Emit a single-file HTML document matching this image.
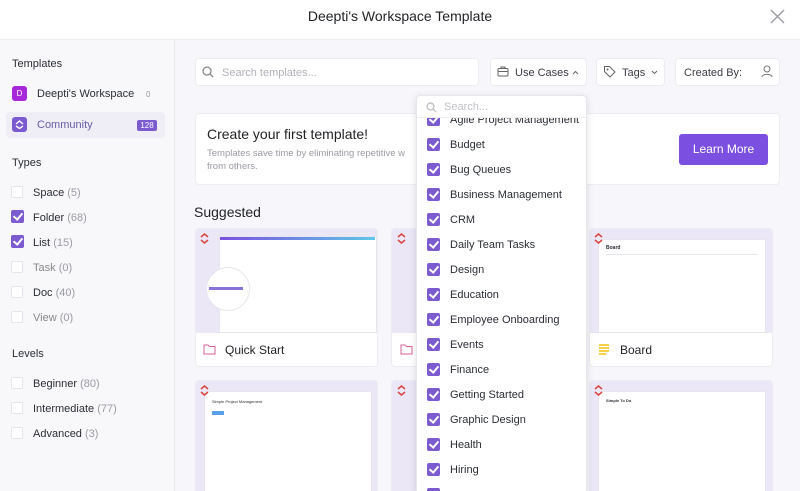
<!DOCTYPE html>
<html><head><meta charset="utf-8"><style>
*{box-sizing:border-box;margin:0;padding:0}
html,body{width:800px;height:491px;overflow:hidden}
body{font-family:"Liberation Sans",sans-serif;background:#f7f7fb;position:relative;color:#2a2e34}
.a{position:absolute}
.hdr{left:0;top:0;width:800px;height:40px;background:#fff;border-bottom:1px solid #ececf0}
.side{left:0;top:40px;width:175px;height:451px;background:#f8f8fb;border-right:1px solid #e9e9ee}
.h{font-size:11px;color:#2a2e34}
.t{font-size:11px;color:#2a2e34;white-space:nowrap}
.g{color:#9a9ca3}
.cb{width:12px;height:12px;border:1px solid #e4e4ea;border-radius:2px;background:#fff}
.cbk{width:13px;height:13px;border-radius:2px;background:#7b5bcf}
.cbk:after{content:"";position:absolute;left:4px;top:1px;width:4px;height:7px;border:solid #fff;border-width:0 2px 2px 0;transform:rotate(40deg)}
.box{background:#fff;border:1px solid #ececf1;border-radius:4px}
.card{background:#fff;border:1px solid #ececf1;border-radius:4px;overflow:hidden}
.img{background:#ebe7f7}
.shot{background:#fff;border:1px solid #e6e6ec}
.ln{height:2px;background:#e6e6ec;position:absolute}
</style></head><body>
<div class="a hdr"></div>
<div class="a" style="left:0;top:8px;width:800px;text-align:center;font-size:14px;color:#1f2125">Deepti's Workspace Template</div>
<svg class="a" style="left:770px;top:9px" width="15" height="15"><path d="M1 1L14 14M14 1L1 14" stroke="#9a9ca3" stroke-width="1.4"/></svg>

<div class="a side"></div>
<div class="a h" style="left:12px;top:58px">Templates</div>
<div class="a" style="left:12px;top:86px;width:15px;height:15px;border-radius:3px;background:#a728d8;color:#fff;font-size:8px;text-align:center;line-height:15px">D</div>
<div class="a t" style="left:37px;top:88px">Deepti's Workspace</div>
<div class="a" style="left:146px;top:90px;font-size:8px;color:#999">0</div>
<div class="a" style="left:6px;top:112px;width:159px;height:26px;background:#efeef6;border-radius:4px"></div>
<div class="a" style="left:12px;top:117px;width:15px;height:15px;border-radius:3px;background:#7b5bcf"></div>
<svg class="a" style="left:15px;top:120px" width="9" height="9"><path d="M1 4L4.5 1L8 4M1 6L4.5 8.5L8 6" stroke="#fff" stroke-width="1.4" fill="none"/></svg>
<div class="a t" style="left:37px;top:119px;color:#6a5aa8">Community</div>
<div class="a" style="left:137px;top:120px;width:20px;height:11px;border-radius:2px;background:#7b5bcf;color:#fff;font-size:8px;text-align:center;line-height:11px">128</div>
<div class="a h" style="left:12px;top:157px">Types</div>
<div class="a cb" style="left:11px;top:186px"></div><div class="a t" style="left:33px;top:187px">Space <span class="g">(5)</span></div>
<div class="a cbk" style="left:11px;top:210px"></div><div class="a t" style="left:33px;top:212px">Folder <span class="g">(68)</span></div>
<div class="a cbk" style="left:11px;top:235px"></div><div class="a t" style="left:33px;top:237px">List <span class="g">(15)</span></div>
<div class="a cb" style="left:11px;top:261px"></div><div class="a t" style="left:33px;top:262px;color:#888">Task <span class="g">(0)</span></div>
<div class="a cb" style="left:11px;top:286px"></div><div class="a t" style="left:33px;top:287px">Doc <span class="g">(40)</span></div>
<div class="a cb" style="left:11px;top:311px"></div><div class="a t" style="left:33px;top:312px;color:#888">View <span class="g">(0)</span></div>
<div class="a h" style="left:12px;top:348px">Levels</div>
<div class="a cb" style="left:11px;top:377px"></div><div class="a t" style="left:33px;top:378px">Beginner <span class="g">(80)</span></div>
<div class="a cb" style="left:11px;top:402px"></div><div class="a t" style="left:33px;top:403px">Intermediate <span class="g">(77)</span></div>
<div class="a cb" style="left:11px;top:427px"></div><div class="a t" style="left:33px;top:428px">Advanced <span class="g">(3)</span></div>

<div class="a box" style="left:195px;top:58px;width:284px;height:28px"></div>
<svg class="a" style="left:202px;top:66px" width="12" height="12"><circle cx="5" cy="5" r="4" stroke="#888" stroke-width="1.3" fill="none"/><path d="M8 8L11 11" stroke="#888" stroke-width="1.3"/></svg>
<div class="a t" style="left:222px;top:67px;color:#b0b2b8">Search templates...</div>
<div class="a box" style="left:490px;top:58px;width:97px;height:28px"></div>
<svg class="a" style="left:497px;top:66px" width="12" height="11"><rect x="1" y="2.5" width="10" height="7.5" rx="1" stroke="#666" fill="none"/><path d="M4 2.5V1H8V2.5M1 5.5H11" stroke="#666" fill="none"/></svg>
<div class="a t" style="left:515px;top:67px;color:#3a3d44">Use Cases</div>
<svg class="a" style="left:572px;top:70px" width="7" height="5"><path d="M1 4L3.5 1.5L6 4" stroke="#666" fill="none"/></svg>
<div class="a box" style="left:596px;top:58px;width:69px;height:28px"></div>
<svg class="a" style="left:603px;top:65px" width="13" height="13"><path d="M1.5 1.5H6.5L12 7L7 12L1.5 6.5Z" stroke="#666" fill="none"/><circle cx="4.5" cy="4.5" r="1" fill="#666"/></svg>
<div class="a t" style="left:622px;top:67px;color:#3a3d44">Tags</div>
<svg class="a" style="left:651px;top:70px" width="7" height="5"><path d="M1 1L3.5 3.5L6 1" stroke="#666" fill="none"/></svg>
<div class="a box" style="left:675px;top:58px;width:105px;height:28px"></div>
<div class="a t" style="left:684px;top:67px;color:#3a3d44">Created By:</div>
<svg class="a" style="left:761px;top:65px" width="12" height="13"><circle cx="6" cy="4" r="3" stroke="#777" fill="none"/><path d="M1 12C1 8.5 11 8.5 11 12" stroke="#777" fill="none"/></svg>

<div class="a box" style="left:195px;top:113px;width:585px;height:72px"></div>
<div class="a" style="left:207px;top:126px;font-size:14px;color:#1f2125">Create your first template!</div>
<div class="a" style="left:207px;top:148px;font-size:9.5px;color:#9a9ca3;line-height:12.5px">Templates save time by eliminating repetitive w<br>from others.</div>
<div class="a" style="left:679px;top:134px;width:89px;height:31px;background:#7b4fe0;border-radius:3px;color:#fff;font-size:12px;text-align:center;line-height:31px">Learn More</div>

<div class="a" style="left:194px;top:204px;font-size:14px;color:#1f2125">Suggested</div>

<div class="a card" style="left:195px;top:228px;width:183px;height:139px"><div class="img" style="height:104px;position:relative"><div class="a shot" style="left:23px;top:7px;width:158px;height:97px"></div><div class="a" style="left:24px;top:8px;width:155px;height:3px;background:linear-gradient(90deg,#7b4fe0,#5ec6e8)"></div><div class="a" style="left:10px;top:38px;width:44px;height:44px;border-radius:50%;background:#fff;border:1px solid #e6e6ec"></div><div class="a" style="left:13px;top:58px;width:34px;height:3px;background:#8a73d8"></div></div></div>
<svg class="a" style="left:203px;top:343px" width="13" height="12"><path d="M1 2H5L6.5 3.5H12V11H1Z" stroke="#d7619a" fill="none"/></svg>
<div class="a" style="left:225px;top:343px;font-size:12px;color:#1f2125">Quick Start</div>
<div class="a card" style="left:391px;top:228px;width:183px;height:139px"><div class="img" style="height:104px"></div></div>
<svg class="a" style="left:400px;top:343px" width="13" height="12"><path d="M1 2H5L6.5 3.5H12V11H1Z" stroke="#d7619a" fill="none"/></svg>
<div class="a card" style="left:589px;top:228px;width:184px;height:139px"><div class="img" style="height:104px;position:relative"><div class="a shot" style="left:8px;top:10px;width:168px;height:94px"></div><div class="a" style="left:16px;top:16px;font-size:5px;font-weight:bold">Board</div><div class="ln" style="left:16px;top:25px;width:152px;height:1px"></div></div></div>
<svg class="a" style="left:598px;top:343px" width="12" height="12"><path d="M1 2H11M1 5H11M1 8H11M1 11H8" stroke="#f1c40f" stroke-width="1.4"/></svg>
<div class="a" style="left:620px;top:343px;font-size:12px;color:#1f2125">Board</div>

<div class="a card" style="left:195px;top:380px;width:183px;height:120px"><div class="img" style="height:120px;position:relative"><div class="a shot" style="left:8px;top:10px;width:168px;height:110px"></div><div class="a" style="left:16px;top:18px;font-size:4px">Simple Project Management</div><div class="a" style="left:16px;top:30px;width:12px;height:4px;background:#5aa0e6"></div></div></div>
<div class="a card" style="left:391px;top:380px;width:183px;height:120px"><div class="img" style="height:120px"></div></div>
<div class="a card" style="left:589px;top:380px;width:184px;height:120px"><div class="img" style="height:120px;position:relative"><div class="a shot" style="left:8px;top:10px;width:168px;height:110px"></div><div class="a" style="left:16px;top:17px;font-size:4px;font-weight:bold">Simple To Do</div></div></div>
<svg class="a" style="left:200px;top:233px" width="9" height="11"><path d="M1 4L4.5 1L8 4M1 7L4.5 10L8 7" stroke="#d7443e" stroke-width="1.5" fill="none"/></svg>
<svg class="a" style="left:397px;top:233px" width="9" height="11"><path d="M1 4L4.5 1L8 4M1 7L4.5 10L8 7" stroke="#d7443e" stroke-width="1.5" fill="none"/></svg>
<svg class="a" style="left:594px;top:233px" width="9" height="11"><path d="M1 4L4.5 1L8 4M1 7L4.5 10L8 7" stroke="#d7443e" stroke-width="1.5" fill="none"/></svg>
<svg class="a" style="left:200px;top:385px" width="9" height="11"><path d="M1 4L4.5 1L8 4M1 7L4.5 10L8 7" stroke="#d7443e" stroke-width="1.5" fill="none"/></svg>
<svg class="a" style="left:397px;top:385px" width="9" height="11"><path d="M1 4L4.5 1L8 4M1 7L4.5 10L8 7" stroke="#d7443e" stroke-width="1.5" fill="none"/></svg>
<svg class="a" style="left:594px;top:385px" width="9" height="11"><path d="M1 4L4.5 1L8 4M1 7L4.5 10L8 7" stroke="#d7443e" stroke-width="1.5" fill="none"/></svg>

<div class="a" style="left:416px;top:95px;width:171px;height:400px;background:#fff;border:1px solid #e6e6ec;border-radius:4px;box-shadow:0 2px 8px rgba(0,0,0,.12);overflow:hidden">
<svg class="a" style="left:9px;top:6px" width="11" height="11"><circle cx="4.5" cy="4.5" r="3.5" stroke="#bbb" stroke-width="1.2" fill="none"/><path d="M7 7L10 10" stroke="#bbb" stroke-width="1.2"/></svg>
<div class="a t" style="left:27px;top:5px;color:#c0c2c8">Search...</div>
</div>
<div class="a" style="left:417px;top:118px;width:169px;height:373px;overflow:hidden">
<div class="a" style="left:-1px;top:-5px">
<div class="a cbk" style="left:11px;top:0"></div><div class="a t" style="left:34px;top:1px">Agile Project Management</div>
<div class="a cbk" style="left:11px;top:25px"></div><div class="a t" style="left:34px;top:26px">Budget</div>
<div class="a cbk" style="left:11px;top:50px"></div><div class="a t" style="left:34px;top:51px">Bug Queues</div>
<div class="a cbk" style="left:11px;top:75px"></div><div class="a t" style="left:34px;top:76px">Business Management</div>
<div class="a cbk" style="left:11px;top:100px"></div><div class="a t" style="left:34px;top:101px">CRM</div>
<div class="a cbk" style="left:11px;top:125px"></div><div class="a t" style="left:34px;top:126px">Daily Team Tasks</div>
<div class="a cbk" style="left:11px;top:150px"></div><div class="a t" style="left:34px;top:151px">Design</div>
<div class="a cbk" style="left:11px;top:175px"></div><div class="a t" style="left:34px;top:176px">Education</div>
<div class="a cbk" style="left:11px;top:200px"></div><div class="a t" style="left:34px;top:201px">Employee Onboarding</div>
<div class="a cbk" style="left:11px;top:225px"></div><div class="a t" style="left:34px;top:226px">Events</div>
<div class="a cbk" style="left:11px;top:250px"></div><div class="a t" style="left:34px;top:251px">Finance</div>
<div class="a cbk" style="left:11px;top:275px"></div><div class="a t" style="left:34px;top:276px">Getting Started</div>
<div class="a cbk" style="left:11px;top:300px"></div><div class="a t" style="left:34px;top:301px">Graphic Design</div>
<div class="a cbk" style="left:11px;top:325px"></div><div class="a t" style="left:34px;top:326px">Health</div>
<div class="a cbk" style="left:11px;top:350px"></div><div class="a t" style="left:34px;top:351px">Hiring</div>
<div class="a cbk" style="left:11px;top:375px"></div>
</div></div>
<div class="a" style="left:417px;top:117px;width:169px;height:1px;background:#eee"></div>
</body></html>
